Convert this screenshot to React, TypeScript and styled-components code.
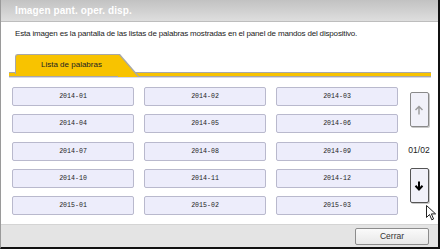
import styled, { createGlobalStyle } from "styled-components";

const GlobalStyle = createGlobalStyle`
  html, body {
    margin: 0;
    padding: 0;
    background: #ffffff;
  }
  body {
    font-family: "Liberation Sans", Arial, sans-serif;
  }
`;

const words = [
  "2014-01", "2014-02", "2014-03",
  "2014-04", "2014-05", "2014-06",
  "2014-07", "2014-08", "2014-09",
  "2014-10", "2014-11", "2014-12",
  "2015-01", "2015-02", "2015-03",
];

function App() {
  return (
    <>
      <GlobalStyle />
      <StyledWindow>
        <div className="title">Imagen pant. oper. disp.</div>
        <div className="body">
          <p className="desc">
            Esta imagen es la pantalla de las listas de palabras mostradas en el panel de mandos del dispositivo.
          </p>
          <TabStrip>
            <Tab>Lista de palabras</Tab>
          </TabStrip>
          <div className="content">
            <WordGrid>
              {words.map((w) => (
                <WordButton key={w}>{w}</WordButton>
              ))}
            </WordGrid>
            <div className="pager">
              <PageButton disabled>
                <svg width="10" height="10" viewBox="0 0 10 10">
                  <path d="M5 1.5 V9.5 M1.5 5 L5 1.5 L8.5 5" stroke="#9a9a9a" strokeWidth="1.4" fill="none" />
                </svg>
              </PageButton>
              <div className="count">01/02</div>
              <PageButton>
                <svg width="10" height="10" viewBox="0 0 10 10">
                  <path d="M5 0.5 V8 M1.5 4.8 L5 8.5 L8.5 4.8" stroke="#000" strokeWidth="2" fill="none" />
                </svg>
              </PageButton>
              <Cursor width="11" height="16" viewBox="0 0 11 16">
                <path d="M0.5 0.5 L0.5 12.5 L3.5 9.5 L5.8 14.8 L7.6 14 L5.4 8.9 L9.6 8.9 Z" fill="#fff" stroke="#222" strokeWidth="1" strokeLinejoin="round" />
              </Cursor>
            </div>
          </div>
        </div>
        <div className="footer">
          <CloseButton>Cerrar</CloseButton>
        </div>
      </StyledWindow>
    </>
  );
}
export default App;

const StyledWindow = styled.div`
  width: 440px;
  height: 249px;
  box-sizing: border-box;
  border-left: 1px solid #9a9a9a;
  border-right: 2px solid #111;
  border-bottom: 2px solid #111;
  display: flex;
  flex-direction: column;
  background: #fff;
  overflow: hidden;

  .title {
    height: 22px;
    box-sizing: border-box;
    padding-left: 14px;
    background: linear-gradient(to bottom, #c2c2c2, #dedede);
    border-bottom: 1px solid #bdbdbd;
    color: #fff;
    font-weight: bold;
    font-size: 10px;
    line-height: 22px;
    letter-spacing: 0.1px;
  }
  .body {
    flex: 1;
    display: flex;
    flex-direction: column;
  }
  .desc {
    margin: 7px 0 0 14px;
    font-size: 8px;
    line-height: 10px;
    color: #222;
    letter-spacing: -0.17px;
    white-space: nowrap;
  }
  .content {
    display: flex;
    padding: 11px 0 0 11px;
  }
  .pager {
    position: relative;
    flex: 1;
    display: flex;
    flex-direction: column;
    align-items: center;
    padding-top: 5px;
    padding-left: 2px;
  }
  .count {
    margin: 18px 0 13px;
    font-size: 8.5px;
    line-height: 10px;
    color: #222;
  }
  .footer {
    height: 23px;
    box-sizing: border-box;
    background: #e4e4e4;
    border-top: 1px solid #d4d4d4;
    display: flex;
    justify-content: flex-end;
    align-items: center;
    padding-right: 9px;
  }
`;

const TabStrip = styled.div`
  margin: 15px 7px 0 8px;
  padding-left: 6px;
  border-bottom: 4px solid #f8c300;
  box-shadow: 0 1px 0 #a8a8a8, 0 2px 0 #d8d8e8;
  position: relative;
  &::before {
    content: "";
    position: absolute;
    left: 0;
    right: 0;
    bottom: -1px;
    border-top: 1px solid #a8a8a8;
  }
`;

const Tab = styled.div`
  position: relative;
  z-index: 1;
  width: 104px;
  height: 20px;
  margin-bottom: -2px;
  box-sizing: border-box;
  background: #f8c300;
  border-top: 1px solid #a8a8a8;
  border-left: 1px solid #a8a8a8;
  border-top-left-radius: 3px;
  font-size: 8px;
  line-height: 20px;
  padding-left: 25px;
  color: #222;
  &::before,
  &::after {
    content: "";
    position: absolute;
    top: -1px;
    width: 20px;
    height: 22px;
    clip-path: polygon(0 0, 1px 0, 100% 100%, 0 100%);
  }
  &::before {
    right: -20px;
    background: #a8a8a8;
  }
  &::after {
    right: -19px;
    top: 0;
    background: #f8c300;
  }
`;

const WordGrid = styled.div`
  display: grid;
  grid-template-columns: repeat(3, 122px);
  grid-auto-rows: 19px;
  column-gap: 10px;
  row-gap: 8.25px;
`;

const WordButton = styled.div`
  box-sizing: border-box;
  background: #ededfb;
  border: 1px solid #b9b9cd;
  border-radius: 2px;
  display: flex;
  align-items: center;
  justify-content: center;
  font-family: "Liberation Mono", monospace;
  font-size: 6.6px;
  color: #222;
`;

const PageButton = styled.div<{ disabled?: boolean }>`
  width: 19px;
  height: 35px;
  box-sizing: border-box;
  background: #f1f1f9;
  border: 1px solid ${(p) => (p.disabled ? "#8a8a8a" : "#555")};
  border-radius: 2px;
  box-shadow: 1px 1px 0 #c8c8c8;
  display: flex;
  align-items: center;
  justify-content: center;
`;

const Cursor = styled.svg`
  position: absolute;
  left: 28px;
  top: 118px;
`;

const CloseButton = styled.div`
  width: 74px;
  height: 17px;
  box-sizing: border-box;
  background: linear-gradient(to bottom, #fafafa, #e8e8e8);
  border: 1px solid #8c8c8c;
  border-radius: 2px;
  font-size: 8.5px;
  line-height: 15px;
  text-align: center;
  color: #333;
`;
